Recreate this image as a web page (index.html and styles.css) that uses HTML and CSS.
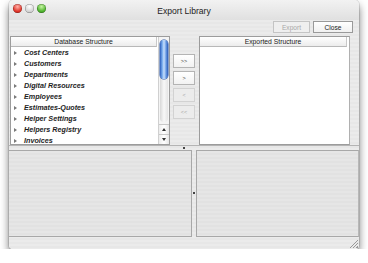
FILE: index.html
```html
<!DOCTYPE html>
<html>
<head>
    <title>Export Library</title>
    <link rel="stylesheet" href="styles.css">
</head>
<body>
    <div class="window">
        <div class="titlebar">
            <div class="lights">
                <span class="light red"></span>
                <span class="light gray"></span>
                <span class="light green"></span>
            </div>
            <div class="title">Export Library</div>
        </div>

        <div class="toolbar">
            <button class="btn" disabled>Export</button>
            <button class="btn">Close</button>
        </div>

        <div class="upper">
            <div class="list source">
                <div class="list-body">
                    <div class="list-head">Database Structure</div>
                    <ul class="rows">
                        <li><span class="tri"></span>Cost Centers</li>
                        <li><span class="tri"></span>Customers</li>
                        <li><span class="tri"></span>Departments</li>
                        <li><span class="tri"></span>Digital Resources</li>
                        <li><span class="tri"></span>Employees</li>
                        <li><span class="tri"></span>Estimates-Quotes</li>
                        <li><span class="tri"></span>Helper Settings</li>
                        <li><span class="tri"></span>Helpers Registry</li>
                        <li><span class="tri"></span>Invoices</li>
                    </ul>
                </div>
                <div class="scrollbar">
                    <div class="track"><div class="thumb"></div></div>
                    <div class="arrow up"></div>
                    <div class="arrow down"></div>
                </div>
            </div>

            <div class="mover">
                <button class="move">&gt;&gt;</button>
                <button class="move">&gt;</button>
                <button class="move" disabled>&lt;</button>
                <button class="move" disabled>&lt;&lt;</button>
            </div>

            <div class="list target">
                <div class="list-body">
                    <div class="list-head">Exported Structure</div>
                </div>
            </div>
        </div>

        <div class="hsplit"><span class="grip"></span></div>

        <div class="lower">
            <div class="pane"></div>
            <div class="vsplit"><span class="grip"></span></div>
            <div class="pane"></div>
        </div>

        <div class="statusbar"><span class="resize"></span></div>
    </div>
</body>
</html>
```

FILE: styles.css
```css
body {
    margin: 0;
    background: #ffffff;
    font-family: "Liberation Sans", Arial, sans-serif;
}
.window {
    margin-left: 9px;
    width: 350px;
    height: 249px;
    display: flex;
    flex-direction: column;
    border-radius: 5px 5px 4px 4px;
    background: repeating-linear-gradient(#ebebeb 0 2px, #e7e7e7 2px 4px);
    box-shadow: 0 5px 8px rgba(0, 0, 0, 0.55), 0 0 0 1px rgba(0, 0, 0, 0.1);
    overflow: hidden;
}
.titlebar {
    height: 20px;
    position: relative;
    display: flex;
    align-items: center;
    justify-content: center;
    background: linear-gradient(#f2f2f2, #e0e0e0);
}
.lights {
    position: absolute;
    left: 4px;
    top: 4px;
    display: flex;
    gap: 3px;
}
.light {
    width: 9px;
    height: 9px;
    border-radius: 50%;
    box-shadow: inset 0 0 0 0.5px rgba(0, 0, 0, 0.35);
}
.red {
    background: radial-gradient(circle at 50% 30%, #ffb0a8, #e0352a 60%, #a8180f);
}
.gray {
    background: radial-gradient(circle at 50% 30%, #ffffff, #d4d4d4 60%, #a8a8a8);
}
.green {
    background: radial-gradient(circle at 50% 30%, #c8f5a4, #4fb42e 60%, #2d7a16);
}
.title {
    font-size: 8.6px;
    color: #222;
    margin-top: 1px;
}
.toolbar {
    height: 16px;
    display: flex;
    justify-content: flex-end;
    align-items: flex-start;
    gap: 3px;
    padding: 1px 6px 0 0;
    box-sizing: border-box;
}
.btn {
    height: 12px;
    padding: 0;
    border: 1px solid #9a9a9a;
    background: linear-gradient(#ffffff, #f1f1f1);
    font-family: "Liberation Sans", Arial, sans-serif;
    font-size: 6.6px;
    color: #222;
    width: 40px;
}
.btn:disabled {
    width: 37px;
    border-color: #c4c4c4;
    color: #a8a8a8;
    background: #efefef;
}
.upper {
    height: 109px;
    display: flex;
}
.list {
    display: flex;
    background: #ffffff;
    border: 1px solid #9c9c9c;
    box-sizing: border-box;
}
.source {
    margin-left: 1px;
    width: 160px;
}
.target {
    width: 151px;
    border-right-color: #b0b0b0;
}
.list-body {
    flex: 1;
    overflow: hidden;
}
.list-head {
    height: 9px;
    line-height: 9px;
    font-size: 6.8px;
    color: #222;
    text-align: center;
    background: linear-gradient(#ffffff, #ececec);
    border-bottom: 1px solid #b8b8b8;
    border-right: 1px solid #c8c8c8;
    margin-right: 1px;
}
.target .list-head {
    margin-right: 2px;
}
.rows {
    list-style: none;
    margin: 0;
    padding: 0;
}
.rows li {
    height: 11px;
    display: flex;
    align-items: center;
    font-size: 7.2px;
    font-weight: bold;
    font-style: italic;
    color: #1e1e1e;
}
.tri {
    width: 0;
    height: 0;
    margin: 0 7px 0 3px;
    border-left: 3px solid #7a7a7a;
    border-top: 2.5px solid transparent;
    border-bottom: 2.5px solid transparent;
}
.scrollbar {
    width: 10px;
    display: flex;
    flex-direction: column;
    background: #f4f4f4;
    border-left: 1px solid #d0d0d0;
}
.track {
    flex: 1;
    margin: 3px 1px 2px;
    border-radius: 4px;
    background: linear-gradient(to right, #d8d8d8, #f8f8f8 50%, #e4e4e4);
}
.thumb {
    height: 39px;
    border-radius: 4px;
    background: linear-gradient(to right, #2c5fbe, #7eb0ef 30%, #c9e0fb 50%, #6a9ce6 75%, #2a5ab4);
    box-shadow: 0 0 0 0.5px #1f4a9a;
}
.arrow {
    height: 9px;
    position: relative;
    border-top: 1px solid #c8c8c8;
    background: linear-gradient(to right, #ececec, #ffffff 50%, #e6e6e6);
}
.arrow::after {
    content: "";
    position: absolute;
    left: 3px;
    top: 3px;
    border-left: 2px solid transparent;
    border-right: 2px solid transparent;
}
.up::after {
    border-bottom: 3px solid #333;
}
.down::after {
    border-top: 3px solid #333;
}
.mover {
    width: 29px;
    display: flex;
    flex-direction: column;
    gap: 3px;
    padding: 18px 0 0 3px;
    box-sizing: border-box;
}
.move {
    width: 22px;
    height: 14px;
    padding: 0;
    border: 1px solid #b4b4b4;
    background: linear-gradient(#ffffff, #f2f2f2);
    font-family: "Liberation Sans", Arial, sans-serif;
    font-size: 5.5px;
    color: #444;
}
.move:disabled {
    border-color: #d2d2d2;
    background: #ececec;
    color: #aaa;
}
.hsplit {
    height: 5px;
    position: relative;
    border-top: 1px solid #b4b4b4;
    box-sizing: border-box;
}
.hsplit .grip {
    position: absolute;
    left: 174px;
    top: 1px;
    width: 2px;
    height: 2px;
    background: #444;
}
.lower {
    height: 87px;
    display: flex;
}
.pane {
    border: 1px solid #a8a8a8;
    background: repeating-linear-gradient(#e6e6e6 0 2px, #e2e2e2 2px 4px);
}
.pane:first-child {
    width: 182px;
    border-left: none;
}
.pane:last-child {
    flex: 1;
    border-right-color: #b8b8b8;
}
.vsplit {
    width: 4px;
    position: relative;
}
.vsplit .grip {
    position: absolute;
    left: 1px;
    top: 42px;
    width: 2px;
    height: 2px;
    background: #444;
}
.statusbar {
    flex: 1;
    position: relative;
}
.resize {
    position: absolute;
    right: 1px;
    bottom: 1px;
    width: 8px;
    height: 8px;
    background: linear-gradient(135deg, transparent 45%, #999 45% 52%, transparent 52% 65%, #999 65% 72%, transparent 72% 85%, #999 85%);
}
```
